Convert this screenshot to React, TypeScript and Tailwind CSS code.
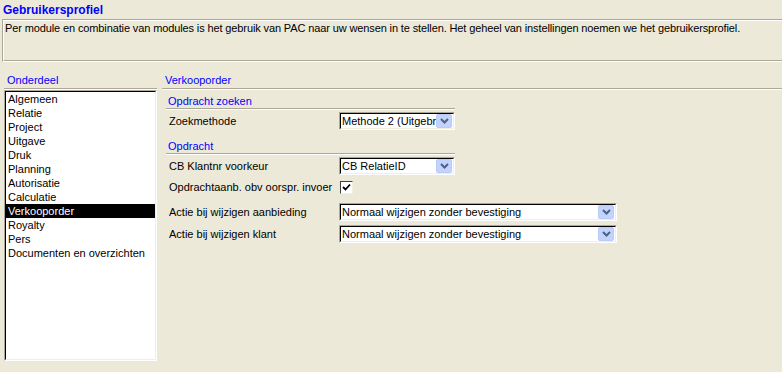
import React from "react";

const font = { fontFamily: '"Liberation Sans", Arial, sans-serif' };

function Chevron() {
  return (
    <svg width="9" height="6" viewBox="0 0 9 6">
      <path d="M1 1 L4.5 4.5 L8 1" fill="none" stroke="#4D6185" strokeWidth="2" />
    </svg>
  );
}

function Combo({ value, width }: { value: string; width: string }) {
  return (
    <div className={`${width} shrink-0 h-[18px] border-t border-l border-t-[#ACA899] border-l-[#ACA899] border-b border-r border-b-white border-r-white`}>
      <div className="h-full flex items-center bg-white border-t border-l border-t-black border-l-black border-b border-r border-b-[#F1EFE2] border-r-[#F1EFE2]">
        <div className="flex-1 overflow-hidden whitespace-nowrap pl-[1px] text-[11px] leading-[13px] text-black">{value}</div>
        <div className="w-[16px] h-[14px] mr-[1px] flex items-center justify-center rounded-[2px] bg-[#C3D3FD] border border-[#B9CCF7]">
          <Chevron />
        </div>
      </div>
    </div>
  );
}

function Sep({ className = "" }: { className?: string }) {
  return <div className={`h-[2px] border-t border-t-[#ACA899] border-b border-b-white ${className}`} />;
}

const items = [
  "Algemeen",
  "Relatie",
  "Project",
  "Uitgave",
  "Druk",
  "Planning",
  "Autorisatie",
  "Calculatie",
  "Verkooporder",
  "Royalty",
  "Pers",
  "Documenten en overzichten",
];

export default function App() {
  return (
    <div className="w-[782px] h-[372px] bg-[#ECE9D8] overflow-hidden text-[11px] text-black" style={font}>
      <div className="h-[19px] flex items-center pl-[3px] text-[12px] font-bold text-[#0000FF]">Gebruikersprofiel</div>
      <div className="ml-[2px] h-[43px] border-t border-l border-t-[#ACA899] border-l-[#ACA899] border-b border-b-white">
        <div className="h-full border-t border-l border-t-white border-l-white border-b border-b-[#ACA899] pl-[1px] pt-[1px] leading-[13px] tracking-[-0.12px]">
          Per module en combinatie van modules is het gebruik van PAC naar uw wensen in te stellen. Het geheel van instellingen noemen we het gebruikersprofiel.
        </div>
      </div>
      <div className="mt-[10px] flex">
        <div className="ml-[4px] w-[153px] flex flex-col">
          <div className="h-[16px] flex items-center pl-[3px] text-[#0000FF]">Onderdeel</div>
          <Sep />
          <div className="h-[271px] border-t border-l border-t-[#ACA899] border-l-[#ACA899] border-b border-r border-b-white border-r-white">
            <div className="h-full bg-white border-t border-l border-t-black border-l-black border-b border-r border-b-[#F1EFE2] border-r-[#F1EFE2]">
              {items.map((it) => (
                <div
                  key={it}
                  className={`h-[14px] leading-[14px] pl-[2px] whitespace-nowrap ${it === "Verkooporder" ? "bg-black text-white" : ""}`}
                >
                  {it}
                </div>
              ))}
            </div>
          </div>
        </div>
        <div className="ml-[5px] flex-1 flex flex-col">
          <div className="h-[16px] flex items-center pl-[3px] text-[#0000FF]">Verkooporder</div>
          <Sep />
          <div className="ml-[4px] w-[289px] flex flex-col">
            <div className="h-[18px] flex items-end pl-[2px] leading-[13px] text-[#0000FF]">Opdracht zoeken</div>
            <Sep />
            <div className="mt-[2px] flex items-center">
              <div className="w-[173px] shrink-0 pl-[3px] whitespace-nowrap">Zoekmethode</div>
              <Combo value="Methode 2 (Uitgebr" width="w-[116px]" />
            </div>
            <div className="h-[23px] flex items-end pl-[2px] leading-[13px] text-[#0000FF]">Opdracht</div>
            <Sep />
            <div className="mt-[2px] flex items-center">
              <div className="w-[173px] shrink-0 pl-[3px] whitespace-nowrap">CB Klantnr voorkeur</div>
              <Combo value="CB RelatieID" width="w-[116px]" />
            </div>
            <div className="mt-[6px] h-[13px] flex items-center">
              <div className="w-[174px] shrink-0 pl-[3px] whitespace-nowrap">Opdrachtaanb. obv oorspr. invoer</div>
              <div className="w-[13px] h-[13px] shrink-0 bg-white border-t border-l border-t-[#404040] border-l-[#404040] border-b border-r border-b-[#F1EFE2] border-r-[#F1EFE2] flex items-center justify-center">
                <svg width="9" height="9" viewBox="0 0 9 9">
                  <path d="M1 4 L3.5 6.5 L8 1.5" fill="none" stroke="black" strokeWidth="1.8" />
                </svg>
              </div>
            </div>
            <div className="mt-[9px] flex items-center">
              <div className="w-[173px] shrink-0 pl-[3px] whitespace-nowrap">Actie bij wijzigen aanbieding</div>
              <Combo value="Normaal wijzigen zonder bevestiging" width="w-[278px]" />
            </div>
            <div className="mt-[4px] flex items-center">
              <div className="w-[173px] shrink-0 pl-[3px] whitespace-nowrap">Actie bij wijzigen klant</div>
              <Combo value="Normaal wijzigen zonder bevestiging" width="w-[278px]" />
            </div>
          </div>
        </div>
      </div>
    </div>
  );
}
